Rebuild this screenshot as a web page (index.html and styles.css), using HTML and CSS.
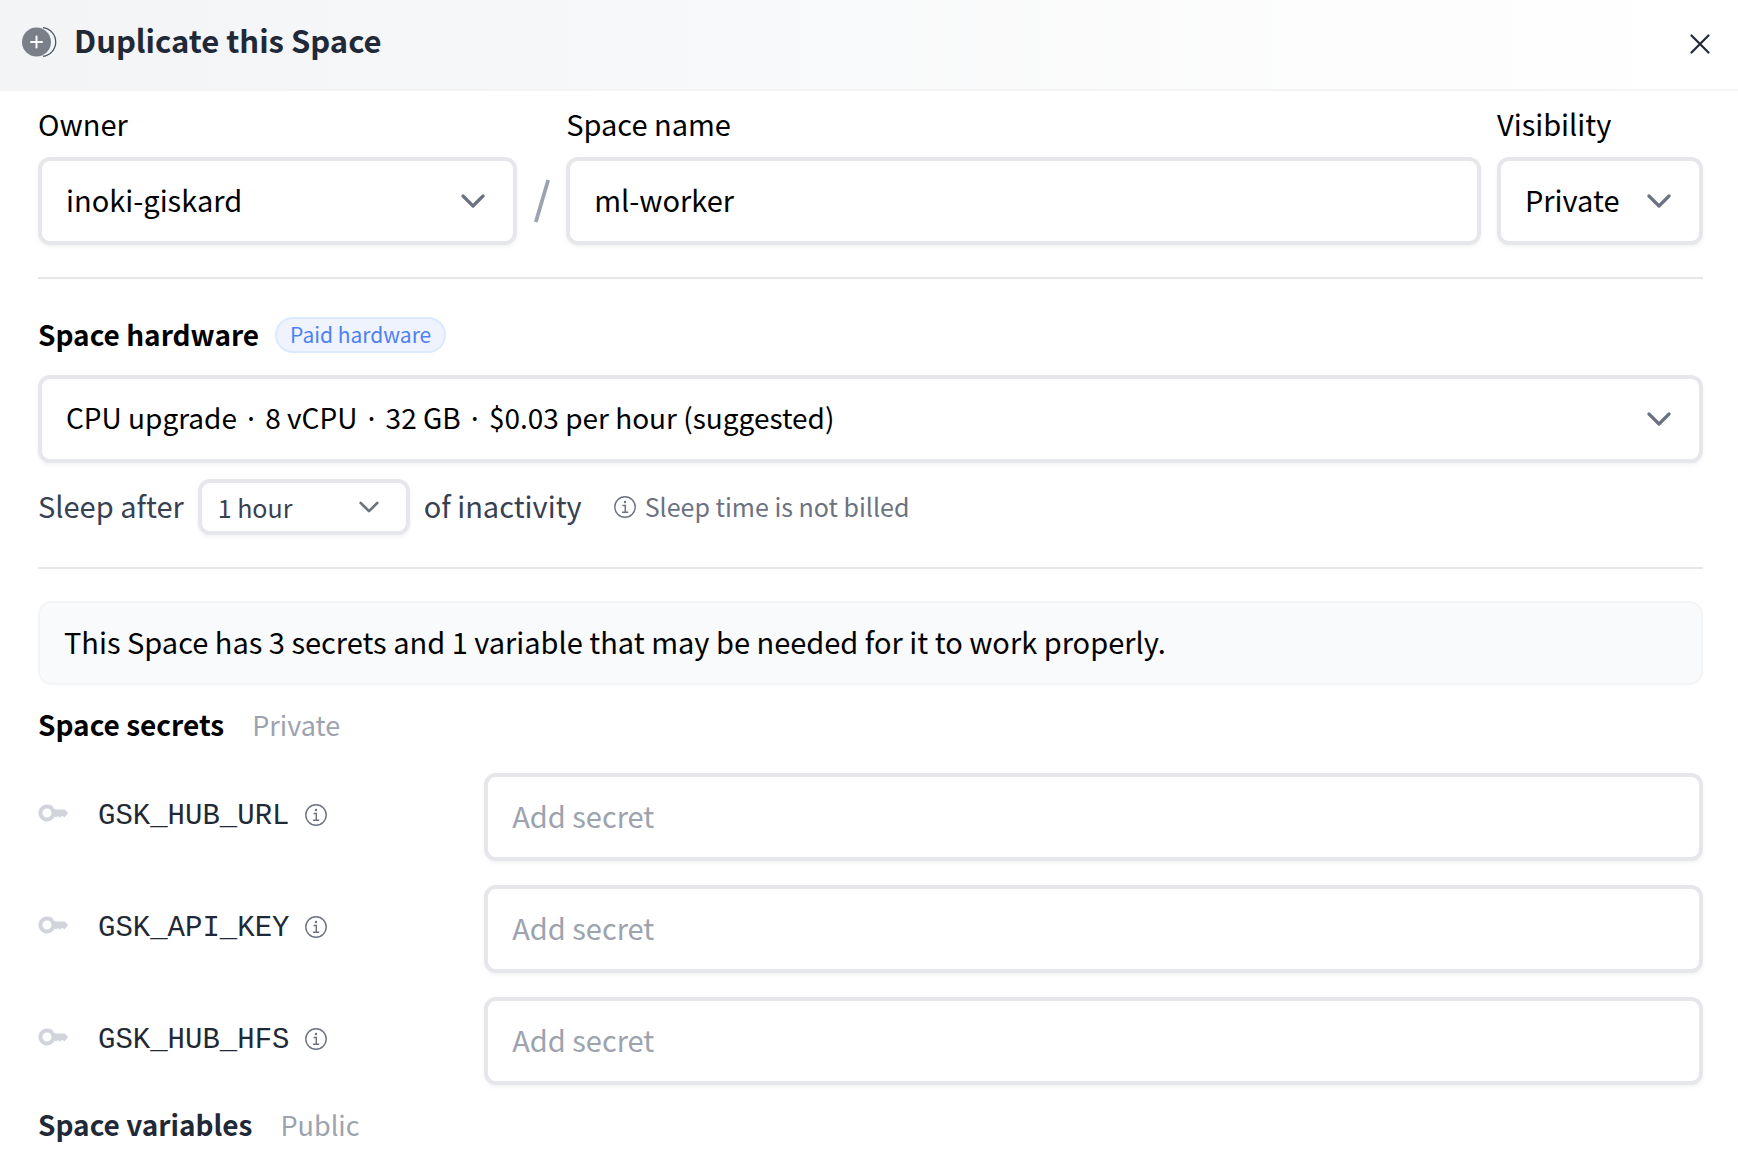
FILE: index.html
```html
<!DOCTYPE html>
<html lang="en">
<head>
<meta charset="utf-8">
<meta name="viewport" content="width=device-width, initial-scale=1">
<title>Duplicate this Space</title>
<link rel="stylesheet" href="styles.css">
</head>
<body>
<svg class="sprite" aria-hidden="true">
  <symbol id="chevron" viewBox="0 0 24 14"><path d="M2 2l10 10L22 2" fill="none" stroke="currentColor" stroke-width="3.2" stroke-linecap="round" stroke-linejoin="round"/></symbol>
  <symbol id="info" viewBox="0 0 22 22"><circle cx="11" cy="11" r="10.2" fill="none" stroke="currentColor" stroke-width="1.4"/><circle cx="11" cy="6" r="1.2" fill="currentColor"/><path d="M8.5 9.4h2.8v6.8M8 16.3h6.2" fill="none" stroke="currentColor" stroke-width="1.5"/></symbol>
  <symbol id="key" viewBox="0 0 30 18"><path fill="currentColor" fill-rule="evenodd" d="M9 .5a8.500 8.500 0 0 1 7.800 5H27l3 3.500-3.600 4.500-2.200-1.700-2.200 1.900-1.900-1.700-1.700 1.500-1.600-1.300A8.500 8.500 0 1 1 9 .5zM9 4.500a4.500 4.500 0 1 0 0 9a4.500 4.500 0 0 0 0-9z"/></symbol>
</svg>
<main class="dialog">
  <header class="dialog-header">
    <svg class="duplicate-icon" viewBox="0 0 36 30" aria-hidden="true"><circle cx="14.500" cy="15" r="14.500" fill="#7b7f89"/><path d="M14.500 9.500v11M9 15h11" stroke="#fff" stroke-width="2" stroke-linecap="round"/><path d="M21 .7a14.400 14.400 0 0 1 0 28.600" fill="none" stroke="#4b5563" stroke-width="1.300"/></svg>
    <h1 class="dialog-title">Duplicate this Space</h1>
    <button class="close" type="button" aria-label="Close"><svg viewBox="0 0 20 20"><path d="M1.500 1.500l17 17M18.500 1.500l-17 17" stroke="currentColor" stroke-width="2.200" stroke-linecap="round"/></svg></button>
  </header>
  <form class="dialog-body">
    <section class="identity">
      <label class="label" for="owner">Owner</label>
      <label class="label label-name" for="name">Space name</label>
      <label class="label" for="visibility">Visibility</label>
      <div class="select-wrap"><select class="field" id="owner"><option>inoki-giskard</option></select><svg class="chevron"><use href="#chevron"/></svg></div>
      <svg class="slash" viewBox="0 0 16 44" aria-hidden="true"><path d="M14.200 1L1.800 43" stroke="currentColor" stroke-width="3.800"/></svg>
      <input class="field" id="name" type="text" value="ml-worker">
      <div class="select-wrap"><select class="field" id="visibility"><option>Private</option></select><svg class="chevron"><use href="#chevron"/></svg></div>
    </section>
    <section class="hardware">
      <div class="hardware-head"><label class="heading" for="hardware">Space hardware</label><span class="badge">Paid hardware</span></div>
      <div class="select-wrap"><select class="field field-hardware" id="hardware"><option>CPU upgrade · 8 vCPU · 32 GB · $0.03 per hour (suggested)</option></select><svg class="chevron"><use href="#chevron"/></svg></div>
      <div class="sleep">
        <label class="sleep-text" for="sleep">Sleep after</label>
        <div class="select-wrap select-small"><select class="field field-small" id="sleep"><option>1 hour</option></select><svg class="chevron"><use href="#chevron"/></svg></div>
        <span class="sleep-text">of inactivity</span>
        <span class="note"><svg class="info"><use href="#info"/></svg><span class="note-text">Sleep time is not billed</span></span>
      </div>
    </section>
    <p class="banner">This Space has 3 secrets and 1 variable that may be needed for it to work properly.</p>
    <section class="secrets">
      <div class="list-head"><h2 class="heading">Space secrets</h2><span class="scope">Private</span></div>
      <div class="secret"><div class="secret-label"><svg class="key"><use href="#key"/></svg><label class="code" for="hub-url">GSK_HUB_URL</label><svg class="info"><use href="#info"/></svg></div><input class="field" id="hub-url" type="text" placeholder="Add secret"></div>
      <div class="secret"><div class="secret-label"><svg class="key"><use href="#key"/></svg><label class="code" for="api-key">GSK_API_KEY</label><svg class="info"><use href="#info"/></svg></div><input class="field" id="api-key" type="text" placeholder="Add secret"></div>
      <div class="secret"><div class="secret-label"><svg class="key"><use href="#key"/></svg><label class="code" for="hub-hfs">GSK_HUB_HFS</label><svg class="info"><use href="#info"/></svg></div><input class="field" id="hub-hfs" type="text" placeholder="Add secret"></div>
    </section>
    <div class="list-head"><h2 class="heading heading-dark">Space variables</h2><span class="scope">Public</span></div>
  </form>
</main>
</body>
</html>
```
FILE: styles.css
```css
* { box-sizing: border-box; }
body {
  margin: 0;
  background: #fff;
  color: #000;
  font-family: "Noto Sans CJK KR", "Noto Sans", sans-serif;
  font-size: 29px;
  line-height: 48px;
}
h1, h2, p { margin: 0; }
svg { flex: none; }
.sprite { position: absolute; width: 0; height: 0; }

.dialog-header {
  display: flex;
  align-items: center;
  gap: 16px;
  padding: 18px 28px 23px 22px;
  border-bottom: 2px solid #f3f4f6;
  background: linear-gradient(to right, #f3f4f6, #fff);
  color: #1f2937;
}
.duplicate-icon { width: 36px; height: 30px; }
.dialog-title { flex: 1; padding-bottom: 4px; font-size: 31px; line-height: 44px; font-weight: 700; }
.close { display: flex; margin-top: 4px; padding: 0; border: 0; background: none; color: #1f2937; }
.close svg { width: 20px; height: 20px; }

.dialog-body { padding: 8px 35px 0 38px; }

.identity {
  display: grid;
  grid-template-columns: 11fr 49px 21fr 222px;
  align-items: center;
  row-gap: 10px;
  padding-bottom: 32px;
  border-bottom: 2px solid #e5e7eb;
}
.label-name { grid-column: 3; }
.identity > :nth-child(3), .identity > :last-child { margin-left: 16px; }
.slash { width: 16px; height: 44px; justify-self: center; color: #9ca3af; }

.field {
  display: block;
  width: 100%;
  height: 88px;
  margin: 0;
  padding: 0 24px 4px;
  border: 4px solid #e5e7eb;
  border-radius: 12px;
  background: #fff;
  box-shadow: 0 2px 4px rgba(0, 0, 0, 0.05);
  color: #000;
  font: inherit;
  appearance: none;
}
.field::placeholder { color: #9ca3af; opacity: 1; }
.field-hardware { font-size: 28px; }
.select-wrap { position: relative; }
.chevron {
  position: absolute;
  right: 32px;
  top: 37px;
  width: 24px;
  height: 14px;
  color: #6b7280;
  pointer-events: none;
}

.hardware { padding: 32px 0; border-bottom: 2px solid #e5e7eb; }
.hardware-head { display: flex; align-items: center; gap: 16px; margin-bottom: 16px; }
.heading { padding-bottom: 2px; font-size: 28px; line-height: 46px; font-weight: 700; }
.heading-dark { color: #1f2937; }
.badge {
  padding: 0 13px 2px;
  border: 2px solid #dbeafe;
  border-radius: 18px;
  background: #eff3fe;
  color: #4f80f3;
  font-size: 21px;
  line-height: 30px;
}
.sleep { display: flex; align-items: center; gap: 14px; margin-top: 16px; color: #374151; }
.sleep-text { padding-bottom: 4px; }
.select-small { width: 212px; }
.field-small { height: 56px; padding: 0 16px 2px; color: #374151; font-size: 25px; }
.select-small .chevron { right: 31px; top: 22px; width: 20px; height: 12px; }
.info { width: 22px; height: 22px; color: #6b7280; }
.note { display: flex; align-items: center; gap: 9px; margin-left: 18px; color: #6b7280; font-size: 25px; }
.note-text { padding-bottom: 2px; }

.banner {
  margin-top: 32px;
  padding: 14px 24px 18px;
  border: 2px solid #f3f4f6;
  border-radius: 14px;
  background: #f9fafb;
}

.list-head { display: flex; align-items: center; gap: 28px; margin-top: 16px; }
.scope { color: #9ca3af; font-size: 27px; line-height: 48px; }
.secret { display: grid; grid-template-columns: 6fr 17fr; gap: 16px; margin-top: 24px; }
.secret-label { display: flex; align-items: center; height: 80px; }
.secret-label .info { margin-top: 4px; }
.key { width: 30px; height: 18px; color: #d1d5db; }
.code { margin: 0 16px 0 30px; padding-top: 8px; color: #1f2937; font-family: "Liberation Mono", monospace; font-size: 29px; }
```
